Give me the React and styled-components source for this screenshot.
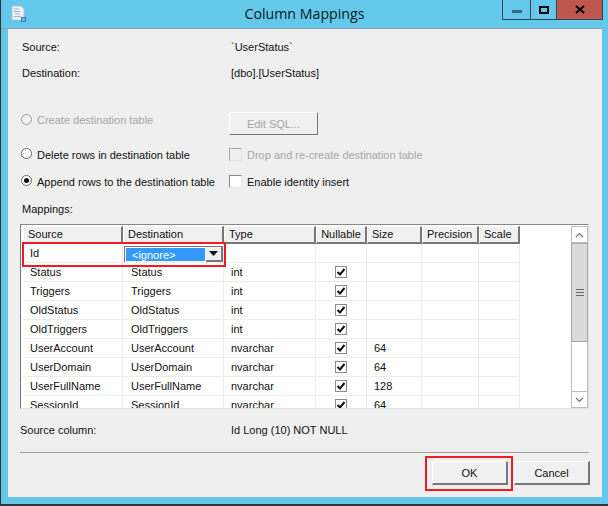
import styled, { createGlobalStyle } from "styled-components"

const GlobalStyle = createGlobalStyle`
    html, body {
        margin: 0;
        padding: 0;
        background: #63c8ea;
    }
    body {
        font-family: "Liberation Sans", Arial, sans-serif;
        font-size: 11px;
        color: #111;
        overflow: hidden;
    }
`

const Window = styled.div`
    position: relative;
    width: 608px;
    height: 506px;
    box-sizing: border-box;
    background: #63c8ea;
    border-left: 1px solid #333;
    border-bottom: 2px solid #333;
    display: flex;
    flex-direction: column;
    overflow: hidden;
`

const TitleBar = styled.div`
    position: relative;
    height: 28px;
    flex: none;
    display: flex;
    align-items: center;
    justify-content: center;
    border-bottom: 1px solid #7e9fb0;
    margin-right: 6px;
`

const TitleText = styled.div`
    font-family: "Open Sans", "Noto Sans", sans-serif;
    font-size: 14.2px;
    color: #0b1a20;
    margin: 0 0 2px 6px;
`

const AppIcon = styled.svg`
    position: absolute;
    left: 10px;
    top: 5px;
`

const Controls = styled.div`
    position: absolute;
    top: 0;
    right: -1px;
    display: flex;
    height: 20px;
    box-sizing: border-box;
    border: 1px solid #2f4650;
    border-top: 0;
`

const ControlButton = styled.div`
    width: ${p => p.$w}px;
    background: ${p => p.$bg || "transparent"};
    border-left: ${p => p.$first ? "0" : "1px solid #2f4650"};
    display: flex;
    align-items: center;
    justify-content: center;
`

const MinimizeGlyph = styled.svg`
    margin-top: 3px;
`

const Body = styled.div`
    flex: 1;
    margin: 0 6px 7px 7px;
    background: #efefef;
    padding: 0 13px 0 12px;
    display: flex;
    flex-direction: column;
`

const InfoRow = styled.div`
    display: grid;
    grid-template-columns: 209px 1fr;
    height: 26px;
    align-items: center;
    padding-left: 2px;
    &:first-child { margin-top: 5px; }
`

const OptionGrid = styled.div`
    display: grid;
    grid-template-columns: 209px 1fr;
    grid-template-rows: 35px 27px 27px;
    margin-top: 20px;
    align-items: center;
`

const Option = styled.label`
    display: flex;
    align-items: center;
    gap: 5px;
    color: ${p => p.$disabled ? "#a6a6a6" : "#111"};
    margin-bottom: ${p => p.$raised ? "7px" : "0"};
`

const Radio = styled.span`
    width: 11px;
    height: 11px;
    box-sizing: border-box;
    border-radius: 50%;
    border: 1px solid ${p => p.$disabled ? "#9a9a9a" : "#666"};
    background: ${p => p.$disabled ? "#efefef" : "#fff"};
    margin: -2px 0 0 1px;
    display: flex;
    align-items: center;
    justify-content: center;
    &::after {
        content: "";
        display: ${p => p.$on ? "block" : "none"};
        width: 5px;
        height: 5px;
        border-radius: 50%;
        background: #111;
    }
`

const CheckBox = styled.span`
    width: 13px;
    height: 13px;
    flex: none;
    box-sizing: border-box;
    border: 1px solid ${p => p.$disabled ? "#a8a8a8" : "#8a8a8a"};
    border-right-color: #e4e4e4;
    border-bottom-color: #e4e4e4;
    background: ${p => p.$disabled ? "#efefef" : "#fff"};
`

const EditButton = styled.div`
    width: 89px;
    height: 23px;
    box-sizing: border-box;
    background: #f0f0f0;
    color: #a6a6a6;
    display: flex;
    align-items: center;
    justify-content: center;
    border: 1px solid #fff;
    border-right: 1px solid #777;
    border-bottom: 1px solid #777;
`

const MappingsLabel = styled.div`
    margin-top: 7px;
    padding-left: 2px;
    height: 15px;
    line-height: 15px;
`

const GridBox = styled.div`
    position: relative;
    height: 185px;
    box-sizing: border-box;
    margin-top: 7px;
    background: #fff;
    border-top: 1px solid #888;
    border-left: 1px solid #777;
    border-bottom: 1px solid #e2e2e2;
    border-right: 1px solid #e2e2e2;
    padding: 1px 0 0 2px;
    display: flex;
    overflow: hidden;
`

const GridInner = styled.div`
    flex: 1;
    min-width: 0;
`

const columns = "100px 101px 92px 51px 55px 57px 41px"

const GridRow = styled.div`
    display: grid;
    grid-template-columns: ${columns};
    width: 497px;
    height: 19px;
`

const HeaderRow = styled(GridRow)`
    height: 18px;
`

const HeaderCell = styled.div`
    box-sizing: border-box;
    background: #f0f0f0;
    border: 1px solid #fff;
    border-right: 2px solid #777;
    border-bottom: 2px solid #777;
    padding-left: ${p => p.$center ? "0" : "4px"};
    line-height: 15px;
    white-space: nowrap;
    text-align: ${p => p.$center ? "center" : "left"};
`

const Cell = styled.div`
    box-sizing: border-box;
    border-right: 1px solid #ececec;
    border-bottom: 1px solid #ececec;
    padding-left: ${p => p.$pad ?? 7}px;
    line-height: 19px;
    white-space: nowrap;
    overflow: hidden;
    display: ${p => p.$center ? "flex" : "block"};
    justify-content: center;
    align-items: center;
`

const Combo = styled.div`
    height: 17px;
    box-sizing: border-box;
    margin: 2px 0 0 1px;
    border: 1px solid #777;
    border-right: 0;
    background: #fff;
    display: flex;
    gap: 1px;
`

const ComboValue = styled.div`
    width: 79px;
    margin: 1px 0 1px 1px;
    background: #3399ff;
    color: #fff;
    padding-left: 6px;
    box-sizing: border-box;
    line-height: 14px;
`

const ComboArrow = styled.div`
    flex: 1;
    background: #efefef;
    border-right: 2px solid #777;
    border-bottom: 2px solid #777;
    display: flex;
    align-items: center;
    justify-content: center;
`

const NullCheck = styled.span`
    width: 12px;
    height: 12px;
    box-sizing: border-box;
    border: 1px solid #8a8a8a;
    background: #fff;
    display: flex;
    align-items: center;
    justify-content: center;
`

const Scrollbar = styled.div`
    position: absolute;
    right: 0;
    top: 1px;
    bottom: 0;
    width: 17px;
    background: #fff;
    display: flex;
    flex-direction: column;
`

const ScrollButton = styled.div`
    height: 17px;
    flex: none;
    box-sizing: border-box;
    border: 1px solid #bdbdbd;
    background: #fff;
    display: flex;
    align-items: center;
    justify-content: center;
`

const ScrollThumb = styled.div`
    height: ${p => p.$h}px;
    flex: none;
    box-sizing: border-box;
    background: #dadada;
    border: 1px solid #a8a8a8;
    display: flex;
    align-items: center;
    justify-content: center;
`

const Grip = styled.div`
    width: 8px;
    height: 7px;
    background: repeating-linear-gradient(#666 0 1px, #dadada 1px 3px);
`

const ScrollTrack = styled.div`
    flex: 1;
    border-left: 1px solid #bdbdbd;
    border-right: 1px solid #bdbdbd;
`

const SourceRow = styled.div`
    display: grid;
    grid-template-columns: 211px 1fr;
    height: 16px;
    line-height: 16px;
    margin-top: 13px;
`

const Divider = styled.hr`
    margin: 14px 0 0;
    border: 0;
    height: 1px;
    background: #a0a0a0;
`

const Footer = styled.div`
    display: flex;
    justify-content: flex-end;
    gap: 6px;
    margin-top: 8px;
    margin-right: -1px;
`

const DialogButton = styled.div`
    width: 76px;
    height: 24px;
    box-sizing: border-box;
    background: #f0f0f0;
    border: 1px solid #fff;
    border-right: 2px solid #777;
    border-bottom: 2px solid #777;
    display: flex;
    align-items: center;
    justify-content: center;
`

const Highlight = styled.div`
    position: absolute;
    box-sizing: border-box;
    border: 2px solid #ed1c24;
    left: ${p => p.$x}px;
    top: ${p => p.$y}px;
    width: ${p => p.$w}px;
    height: ${p => p.$h}px;
    pointer-events: none;
`

const headers = ["Source", "Destination", "Type", "Nullable", "Size", "Precision", "Scale"]

const rows = [
    ["Status", "int", ""],
    ["Triggers", "int", ""],
    ["OldStatus", "int", ""],
    ["OldTriggers", "int", ""],
    ["UserAccount", "nvarchar", "64"],
    ["UserDomain", "nvarchar", "64"],
    ["UserFullName", "nvarchar", "128"],
    ["SessionId", "nvarchar", "64"],
]

const Tick = () => (
    <svg width="10" height="10" viewBox="0 0 10 10">
        <path d="M1.5 5 L4 7.5 L8.5 2" fill="none" stroke="#111" strokeWidth="2" />
    </svg>
)

const Chevron = ({ down }) => (
    <svg width="9" height="6" viewBox="0 0 9 6">
        <path d={down ? "M1 1 L4.5 4.5 L8 1" : "M1 5 L4.5 1.5 L8 5"} fill="none" stroke="#777" strokeWidth="1.2" />
    </svg>
)

const App = () => {
    return (<>
        <GlobalStyle />
        <Window>
            <TitleBar>
                <AppIcon width="16" height="17" viewBox="0 0 16 17">
                    <path d="M1 1 H10 L13 4 V15 H1 Z" fill="#eef2fa" stroke="#b4bdd6" />
                    <path d="M3 4 H8 M3 6.5 H10 M4 9 H9 M3 11.5 H10" stroke="#9fb0d8" strokeWidth="1" />
                    <rect x="10.5" y="12.5" width="4" height="4" fill="#7db0ea" stroke="#3a78c8" />
                </AppIcon>
                <TitleText>Column Mappings</TitleText>
                <Controls>
                    <ControlButton $w={27} $first>
                        <MinimizeGlyph width="10" height="3"><rect width="10" height="3" fill="#36687c" /></MinimizeGlyph>
                    </ControlButton>
                    <ControlButton $w={25}>
                        <svg width="10" height="8"><rect x="1" y="1" width="8" height="6" fill="none" stroke="#000" strokeWidth="2" /></svg>
                    </ControlButton>
                    <ControlButton $w={45} $bg="#c1584f">
                        <svg width="10" height="9" viewBox="0 0 10 9">
                            <path d="M1 1 L9 8 M9 1 L1 8" stroke="#000" strokeWidth="2.2" />
                        </svg>
                    </ControlButton>
                </Controls>
            </TitleBar>
            <Body>
                <InfoRow><span>Source:</span><span>`UserStatus`</span></InfoRow>
                <InfoRow><span>Destination:</span><span>[dbo].[UserStatus]</span></InfoRow>
                <OptionGrid>
                    <Option $disabled $raised><Radio $disabled />Create destination table</Option>
                    <EditButton>Edit SQL...</EditButton>
                    <Option><Radio />Delete rows in destination table</Option>
                    <Option $disabled><CheckBox $disabled />Drop and re-create destination table</Option>
                    <Option><Radio $on />Append rows to the destination table</Option>
                    <Option><CheckBox />Enable identity insert</Option>
                </OptionGrid>
                <MappingsLabel>Mappings:</MappingsLabel>
                <GridBox>
                    <GridInner>
                        <HeaderRow>
                            {headers.map(h => (
                                <HeaderCell key={h} $center={h === "Nullable"}>{h}</HeaderCell>
                            ))}
                        </HeaderRow>
                        <GridRow>
                            <Cell>Id</Cell>
                            <Cell $pad={0}>
                                <Combo>
                                    <ComboValue>&lt;ignore&gt;</ComboValue>
                                    <ComboArrow>
                                        <svg width="9" height="5"><path d="M0 0 H9 L4.5 5 Z" fill="#111" /></svg>
                                    </ComboArrow>
                                </Combo>
                            </Cell>
                            <Cell /><Cell /><Cell /><Cell /><Cell />
                        </GridRow>
                        {rows.map(([name, type, size]) => (
                            <GridRow key={name}>
                                <Cell>{name}</Cell>
                                <Cell $pad={8}>{name}</Cell>
                                <Cell>{type}</Cell>
                                <Cell $center $pad={0}><NullCheck><Tick /></NullCheck></Cell>
                                <Cell>{size}</Cell>
                                <Cell />
                                <Cell />
                            </GridRow>
                        ))}
                    </GridInner>
                    <Scrollbar>
                        <ScrollButton><Chevron /></ScrollButton>
                        <ScrollThumb $h={99}><Grip /></ScrollThumb>
                        <ScrollTrack />
                        <ScrollButton><Chevron down /></ScrollButton>
                    </Scrollbar>
                </GridBox>
                <SourceRow><span>Source column:</span><span>Id Long (10) NOT NULL</span></SourceRow>
                <Divider />
                <Footer>
                    <DialogButton>OK</DialogButton>
                    <DialogButton>Cancel</DialogButton>
                </Footer>
            </Body>
            <Highlight $x={21} $y={242} $w={204} $h={25} />
            <Highlight $x={424} $y={456} $w={88} $h={35} />
        </Window>
    </>)
}

export default App
